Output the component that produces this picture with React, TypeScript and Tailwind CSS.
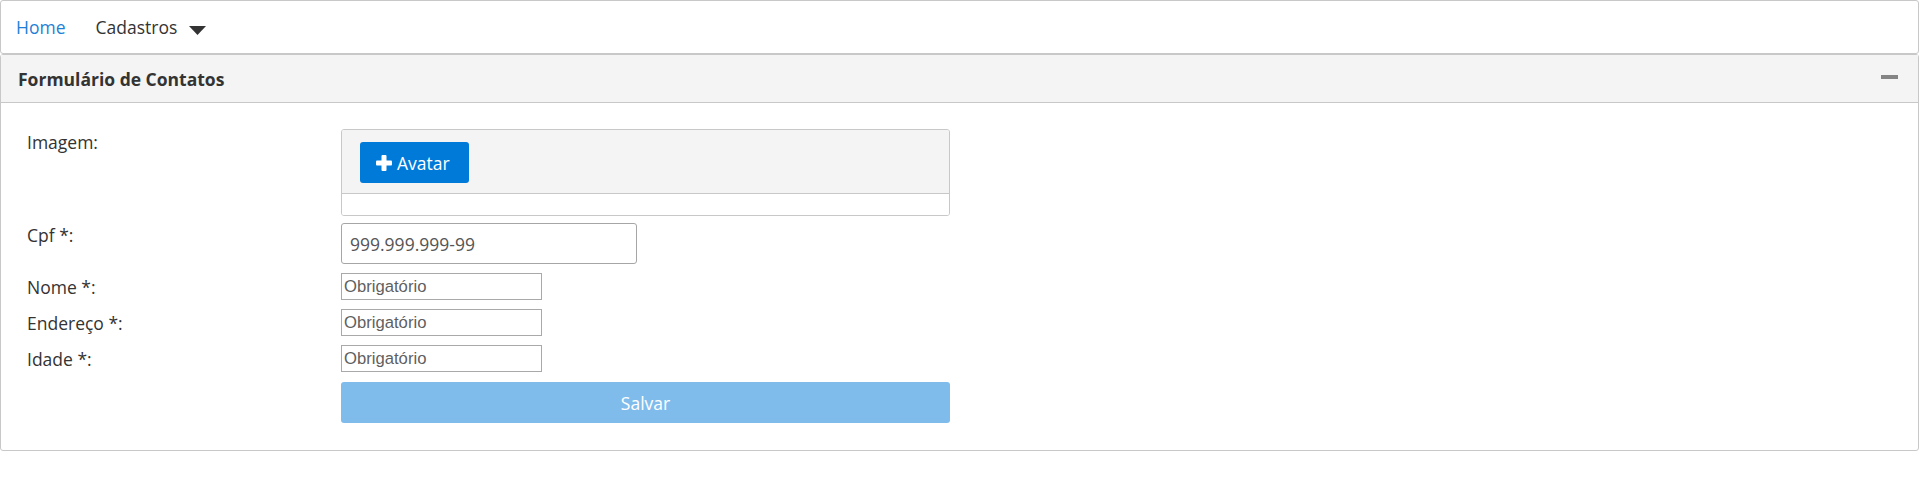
import { useState } from "react"

const Plus = () => (
  <svg width="16" height="16" viewBox="0 0 16 16" className="shrink-0">
    <rect x="5.5" y="0" width="5" height="16" rx="1" fill="#fff" />
    <rect x="0" y="5.5" width="16" height="5" rx="1" fill="#fff" />
  </svg>
)

const Caret = () => (
  <svg width="17" height="9" viewBox="0 0 17 9" className="shrink-0 mt-[8px]">
    <polygon points="0,0 17,0 8.5,9" fill="#333" />
  </svg>
)

const FieldRow = ({ label }: { label: string }) => (
  <div className="flex items-start mt-[9px]">
    <label className="w-[314px] pt-[2px] leading-[24px]">{label}</label>
    <input
      type="text"
      placeholder="Obrigatório"
      className="w-[201px] h-[27px] border border-[#a9a9a9] px-[2px] font-['Liberation_Sans',Arial,sans-serif] text-[16.67px] text-[#333] placeholder:text-[#5f5f5f] outline-none"
    />
  </div>
)

export default function App() {
  const [cpf, setCpf] = useState("")

  return (
    <div className="w-[1919px] bg-white font-['Open_Sans',sans-serif] text-[17.5px] text-[#333]">
      {/* menubar */}
      <nav className="h-[54px] border border-[#c8c8c8] rounded-[3px] flex items-center pl-[15px] pb-[1px]">
        <a href="#" className="text-[#1f7fd6] leading-[24px]">
          Home
        </a>
        <button className="flex items-center gap-[12px] ml-[30px] leading-[24px]">
          Cadastros
          <Caret />
        </button>
      </nav>

      {/* panel */}
      <section className="border border-[#c8c8c8] rounded-[3px]">
        <div className="flex items-center justify-between bg-[#f4f4f4] border-b border-[#c8c8c8] pl-[17px] pr-[20px] pt-[12px] pb-[11px]">
          <h2 className="font-bold leading-[24px]">Formulário de Contatos</h2>
          <span className="block w-[17px] h-[4px] bg-[#848484] mt-[-5px]" />
        </div>

        <div className="pl-[26px] pt-[26px] pb-[27px]">
          {/* imagem */}
          <div className="flex items-start">
            <label className="w-[314px] pt-[1px] leading-[24px]">Imagem:</label>
            <div className="w-[609px] border border-[#c8c8c8] rounded-[3px] overflow-hidden">
              <div className="bg-[#f4f4f4] border-b border-[#c8c8c8] px-[18px] pt-[12px] pb-[10px]">
                <button className="flex items-center gap-[5px] h-[41px] pl-[16px] pr-[19px] bg-[#007ad9] text-white rounded-[3px] leading-[24px]">
                  <Plus />
                  Avatar
                </button>
              </div>
              <div className="h-[21px] bg-white" />
            </div>
          </div>

          {/* cpf */}
          <div className="flex items-start mt-[7px]">
            <label className="w-[314px] leading-[24px]">Cpf *:</label>
            <input
              type="text"
              value={cpf}
              onChange={(e) => setCpf(e.target.value)}
              placeholder="999.999.999-99"
              className="w-[296px] h-[41px] border border-[#a6a6a6] rounded-[3px] px-[8px] text-[17.5px] text-[#333] placeholder:text-[#555] outline-none"
            />
          </div>

          <div className="mt-[3px]">
            <FieldRow label="Nome *:" />
            <FieldRow label="Endereço *:" />
            <FieldRow label="Idade *:" />
          </div>

          {/* salvar */}
          <div className="flex mt-[10px]">
            <div className="w-[314px]" />
            <button
              disabled
              className="w-[609px] h-[41px] bg-[#7fbcec] text-white rounded-[3px] leading-[24px]"
            >
              Salvar
            </button>
          </div>
        </div>
      </section>
    </div>
  )
}
